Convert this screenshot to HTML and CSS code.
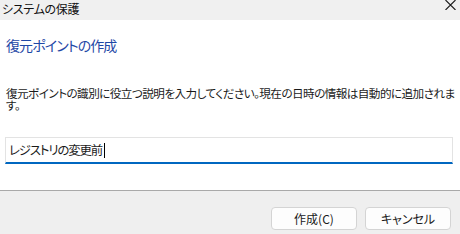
FILE: index.html
```html
<!DOCTYPE html>
<html lang="ja">
<head>
  <meta charset="UTF-8">
  <title>システムの保護</title>
  <link rel="stylesheet" href="styles.css">
</head>
<body>
  <div class="dialog">
    <div class="titlebar">
      <span class="title">システムの保護</span>
      <svg class="close" width="11" height="10" viewBox="0 0 11 10">
        <path d="M0.5 0 L10.5 10 M10.5 0 L0.5 10" stroke="#1a1a1a" stroke-width="1.1" fill="none"/>
      </svg>
    </div>

    <div class="content">
      <h1 class="instruction">復元ポイントの作成</h1>
      <p class="desc">復元ポイントの識別に役立つ説明を入力してください。現在の日時の情報は自動的に追加されます。</p>
      <div class="field">
        <span class="value">レジストリの変更前</span><span class="caret"></span>
      </div>
    </div>

    <div class="footer">
      <button class="btn">作成(C)</button>
      <button class="btn">キャンセル</button>
    </div>
  </div>
</body>
</html>
```

FILE: styles.css
```css
* {
  margin: 0;
  padding: 0;
  box-sizing: border-box;
}

html, body {
  width: 460px;
  height: 234px;
  overflow: hidden;
}

body {
  font-family: "Noto Sans CJK JP", "Noto Sans", sans-serif;
  font-feature-settings: "palt";
  color: #1a1a1a;
  background: #ffffff;
}

.dialog {
  display: flex;
  flex-direction: column;
  height: 234px;
}

.titlebar {
  height: 20px;
  background: #f0f0f0;
  display: flex;
  justify-content: space-between;
  align-items: flex-start;
  padding: 0 4px 0 2px;
}

.title {
  font-size: 12px;
  line-height: 13px;
  padding-top: 2px;
  letter-spacing: -0.3px;
  color: #111;
}

.content {
  height: 170px;
  background: #ffffff;
  padding: 17px 7px 0 6px;
}

.instruction {
  font-size: 14px;
  line-height: 16px;
  font-weight: normal;
  letter-spacing: -0.9px;
  color: #1f48a6;
}

.desc {
  margin-top: 34px;
  margin-right: -5px;
  font-size: 11.6px;
  line-height: 12px;
  letter-spacing: -0.55px;
  color: #1a1a1a;
}

.field {
  margin-top: 26px;
  margin-left: -1px;
  height: 27px;
  border: 1px solid #e3e3e3;
  border-bottom: 2px solid #0067c0;
  display: flex;
  align-items: center;
  padding-left: 3px;
  font-size: 12.4px;
  letter-spacing: -1.1px;
  color: #1a1a1a;
}

.caret {
  display: inline-block;
  width: 1px;
  height: 15px;
  background: #000;
  margin-left: 2px;
}

.footer {
  flex: 1;
  background: #efefef;
  border-top: 1px solid #a9a9a9;
  display: flex;
  justify-content: flex-end;
  align-items: flex-start;
  gap: 8px;
  padding: 16px 9px 0 0;
}

.btn {
  width: 86px;
  height: 23px;
  background: #fdfdfd;
  border: 1px solid #d4d4d4;
  border-radius: 4px;
  font-family: inherit;
  font-feature-settings: "palt";
  font-size: 12px;
  color: #1a1a1a;
}
```
